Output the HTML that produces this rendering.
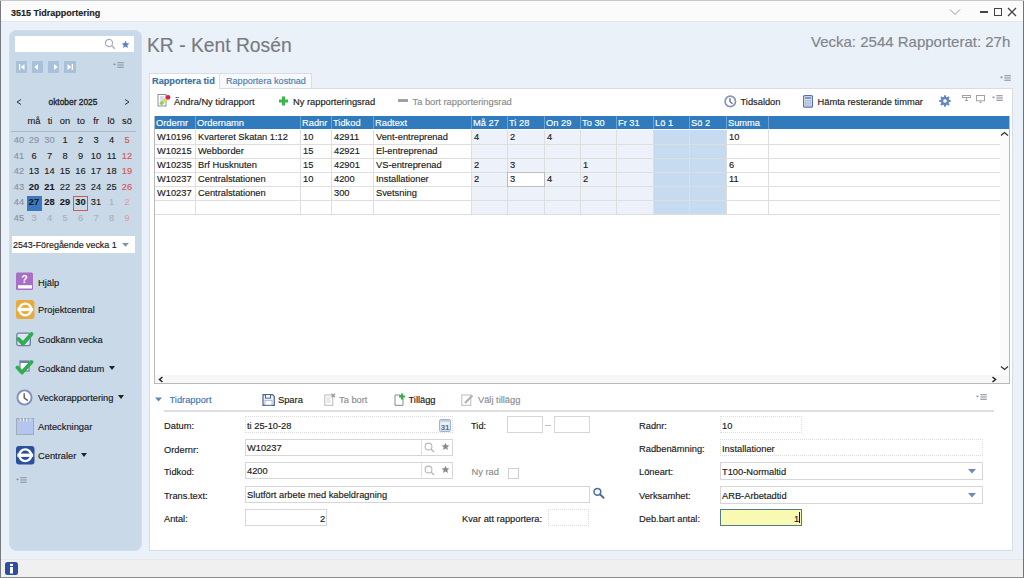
<!DOCTYPE html>
<html><head><meta charset="utf-8">
<style>
*{box-sizing:border-box;margin:0;padding:0}
html,body{width:1024px;height:578px;overflow:hidden;background:#ebf1f9;font-family:"Liberation Sans",sans-serif;font-size:9.3px;color:#1a1a1a}
.a{position:absolute}
.t{position:absolute;white-space:nowrap;line-height:12px;height:12px;-webkit-text-stroke:0.15px currentColor}
#win{position:absolute;left:0;top:0;width:1024px;height:578px;overflow:hidden}
#title{left:1px;top:1px;width:1022px;height:21px;background:#fbfbfb;border-bottom:1px solid #e4e7eb}
#lpanel{left:8.5px;top:29.5px;width:133.5px;height:521.5px;background:#c9d9e8;border-radius:8px;box-shadow:inset 0 0 0 1px #cfdeec}
#status{left:1px;top:559px;width:1022px;height:18px;background:#f0f0f0;border-top:1px solid #e6e6e6}
#main{left:148.5px;top:88px;width:864.5px;height:463px;background:#fff;border:1px solid #d8dde3}
.cal{position:absolute;width:16px;text-align:center;line-height:12px;height:12px;font-size:9.3px;-webkit-text-stroke:0.12px currentColor}
.wk{color:#8a9099}
.gr{color:#8d949c}
.rd{color:#d9534f}
.lrd{color:#e0a0a0}
.lg{color:#a9b0b8}
.b{font-weight:bold}
.menu{position:absolute;left:38px;white-space:nowrap;line-height:12px;height:12px;font-size:9.3px;color:#1a1a1a;-webkit-text-stroke:0.15px currentColor}
.arr{display:inline-block;width:0;height:0;border-left:3.5px solid transparent;border-right:3.5px solid transparent;border-top:4px solid #222;vertical-align:middle;margin-left:5px;position:relative;top:-1px}
</style></head><body>
<div id="win">
<!-- window borders -->
<div class="a" style="left:0;top:0;width:1px;height:578px;background:#767b82"></div>
<div class="a" style="left:1023px;top:0;width:1px;height:578px;background:#707478"></div>
<div class="a" style="left:0;top:0;width:1024px;height:1px;background:#c8c8c8"></div>
<div class="a" style="left:0;top:577px;width:1024px;height:1px;background:#8c8c8c"></div>

<!-- title bar -->
<div id="title" class="a"></div>
<div class="t b" style="left:11px;top:7px;font-size:9px;color:#222">3515 Tidrapportering</div>
<svg class="a" style="left:949px;top:8px" width="12" height="8" viewBox="0 0 12 8"><path d="M1 1.5 L6 6.5 L11 1.5" fill="none" stroke="#9a9a9a" stroke-width="1"/></svg>
<div class="a" style="left:980px;top:11px;width:8px;height:2px;background:#444"></div>
<div class="a" style="left:994px;top:8px;width:8px;height:8px;border:1.5px solid #444"></div>
<svg class="a" style="left:1007px;top:7px" width="10" height="10" viewBox="0 0 10 10"><path d="M1 1 L9 9 M9 1 L1 9" stroke="#444" stroke-width="1.3"/></svg>

<!-- left panel -->
<div id="lpanel" class="a"></div>
<div class="a" style="left:15px;top:36px;width:119px;height:16px;background:#fff"></div>
<svg class="a" style="left:104px;top:38px" width="12" height="12" viewBox="0 0 12 12"><circle cx="5" cy="5" r="3.6" fill="none" stroke="#a8b0c0" stroke-width="1.2"/><path d="M7.6 7.6 L10.8 10.8" stroke="#a8b0c0" stroke-width="1.4"/></svg>
<svg class="a" style="left:121px;top:39.5px" width="9" height="9" viewBox="0 0 11 11"><path d="M5.5 0.8 L6.9 4 L10.3 4.2 L7.7 6.4 L8.5 9.8 L5.5 8 L2.5 9.8 L3.3 6.4 L0.7 4.2 L4.1 4 Z" fill="#5b7fc0"/></svg>
<!-- nav buttons -->
<div class="a" style="left:16px;top:61px;width:11px;height:12px;background:#a9c0da;border-radius:1px"></div>
<div class="a" style="left:32px;top:61px;width:11px;height:12px;background:#a9c0da;border-radius:1px"></div>
<div class="a" style="left:48px;top:61px;width:11px;height:12px;background:#a9c0da;border-radius:1px"></div>
<div class="a" style="left:64px;top:61px;width:12px;height:12px;background:#a9c0da;border-radius:1px"></div>
<svg class="a" style="left:16px;top:61px" width="60" height="12" viewBox="0 0 60 12"><path d="M3 3 h1.3 v6 h-1.3z M8.5 3 L4.8 6 L8.5 9z M22 3 L18.3 6 L22 9z M38 3 L41.7 6 L38 9z M51.5 3 L55.2 6 L51.5 9z M55.7 3 h1.3 v6 h-1.3z" fill="#fff"/></svg>
<svg class="a" style="left:112.5px;top:62px" width="11" height="6" viewBox="0 0 11 6"><path d="M0 1.8 L3 1.8 L1.5 3.6z" fill="#7d8590"/><path d="M4.3 0.5 h6.5 M4.3 2.2 h6.5 M4.3 3.9 h6.5 M4.3 5.5 h6.5" stroke="#98a0aa" stroke-width="0.95"/></svg>

<!-- calendar -->
<svg class="a" style="left:16px;top:99px" width="6" height="6" viewBox="0 0 6 6"><path d="M5 0.5 L1 3 L5 5.5" fill="none" stroke="#333" stroke-width="1"/></svg>
<div class="t" style="left:48.5px;top:95.5px;font-size:8.4px;-webkit-text-stroke:0.3px #222;color:#222">oktober 2025</div>
<svg class="a" style="left:124px;top:99px" width="6" height="6" viewBox="0 0 6 6"><path d="M1 0.5 L5 3 L1 5.5" fill="none" stroke="#333" stroke-width="1"/></svg>
<div class="cal" style="left:26px;top:115px">må</div>
<div class="cal" style="left:42px;top:115px">ti</div>
<div class="cal" style="left:57px;top:115px">on</div>
<div class="cal" style="left:73px;top:115px">to</div>
<div class="cal" style="left:88px;top:115px">fr</div>
<div class="cal" style="left:103px;top:115px">lö</div>
<div class="cal" style="left:119px;top:115px">sö</div>
<div class="a" style="left:11px;top:131px;width:125px;height:1px;background:#a9b6c4"></div>
<div id="calbody"></div>
<div class="cal wk" style="left:11px;top:134.2px">40</div>
<div class="cal gr" style="left:26.0px;top:134.2px">29</div>
<div class="cal gr" style="left:41.5px;top:134.2px">30</div>
<div class="cal " style="left:57.0px;top:134.2px">1</div>
<div class="cal " style="left:72.5px;top:134.2px">2</div>
<div class="cal " style="left:88.0px;top:134.2px">3</div>
<div class="cal " style="left:103.5px;top:134.2px">4</div>
<div class="cal rd" style="left:119.0px;top:134.2px">5</div>
<div class="cal wk" style="left:11px;top:149.6px">41</div>
<div class="cal " style="left:26.0px;top:149.6px">6</div>
<div class="cal " style="left:41.5px;top:149.6px">7</div>
<div class="cal " style="left:57.0px;top:149.6px">8</div>
<div class="cal " style="left:72.5px;top:149.6px">9</div>
<div class="cal " style="left:88.0px;top:149.6px">10</div>
<div class="cal " style="left:103.5px;top:149.6px">11</div>
<div class="cal rd" style="left:119.0px;top:149.6px">12</div>
<div class="cal wk" style="left:11px;top:165.0px">42</div>
<div class="cal " style="left:26.0px;top:165.0px">13</div>
<div class="cal " style="left:41.5px;top:165.0px">14</div>
<div class="cal " style="left:57.0px;top:165.0px">15</div>
<div class="cal " style="left:72.5px;top:165.0px">16</div>
<div class="cal " style="left:88.0px;top:165.0px">17</div>
<div class="cal " style="left:103.5px;top:165.0px">18</div>
<div class="cal rd" style="left:119.0px;top:165.0px">19</div>
<div class="cal wk" style="left:11px;top:180.5px">43</div>
<div class="cal b" style="left:26.0px;top:180.5px">20</div>
<div class="cal b" style="left:41.5px;top:180.5px">21</div>
<div class="cal " style="left:57.0px;top:180.5px">22</div>
<div class="cal " style="left:72.5px;top:180.5px">23</div>
<div class="cal " style="left:88.0px;top:180.5px">24</div>
<div class="cal " style="left:103.5px;top:180.5px">25</div>
<div class="cal rd" style="left:119.0px;top:180.5px">26</div>
<div class="cal wk" style="left:11px;top:196.0px">44</div>
<div class="a" style="left:26.5px;top:195.5px;width:15px;height:15px;background:#3a79c0"></div>
<div class="cal b" style="left:26.0px;top:196.0px">27</div>
<div class="cal b" style="left:41.5px;top:196.0px">28</div>
<div class="cal b" style="left:57.0px;top:196.0px">29</div>
<div class="a" style="left:73.0px;top:195.5px;width:15px;height:15px;border:1px solid #d9534f"></div>
<div class="cal b" style="left:72.5px;top:196.0px">30</div>
<div class="cal " style="left:88.0px;top:196.0px">31</div>
<div class="cal lg" style="left:103.5px;top:196.0px">1</div>
<div class="cal lrd" style="left:119.0px;top:196.0px">2</div>
<div class="cal wk" style="left:11px;top:211.5px">45</div>
<div class="cal lg" style="left:26.0px;top:211.5px">3</div>
<div class="cal lg" style="left:41.5px;top:211.5px">4</div>
<div class="cal lg" style="left:57.0px;top:211.5px">5</div>
<div class="cal lg" style="left:72.5px;top:211.5px">6</div>
<div class="cal lg" style="left:88.0px;top:211.5px">7</div>
<div class="cal lg" style="left:103.5px;top:211.5px">8</div>
<div class="cal lrd" style="left:119.0px;top:211.5px">9</div>


<!-- week dropdown -->
<div class="a" style="left:11.5px;top:236px;width:123px;height:16.5px;background:#fff"></div>
<div class="t" style="left:13px;top:238.5px;font-size:8.9px">2543-Föregående vecka 1</div>
<svg class="a" style="left:122px;top:242.5px" width="7" height="4" viewBox="0 0 7 4"><path d="M0 0 L7 0 L3.5 3.8z" fill="#7d93b3"/></svg>

<!-- menu -->
<div id="menubody"></div>
<svg class="a" style="left:15px;top:272px" width="19" height="19" viewBox="0 0 19 19"><rect x="1" y="0.5" width="17" height="13" rx="1.5" fill="#a86fc4"/><rect x="1" y="12" width="17" height="6" rx="1.2" fill="#a86fc4"/><rect x="3" y="13.2" width="14" height="3.3" fill="#fff"/><text x="9.5" y="10.5" font-family="Liberation Sans" font-weight="bold" font-size="10.5" fill="#fff" text-anchor="middle">?</text></svg>
<div class="menu" style="top:276.5px">Hjälp</div>
<svg class="a" style="left:15.5px;top:300px" width="19" height="19" viewBox="0 0 19 19"><rect x="0" y="0" width="18.5" height="19" rx="3" fill="#eaa93a"/><circle cx="9.25" cy="9.5" r="5.9" fill="none" stroke="#fff" stroke-width="2.4"/><rect x="1.3" y="7.85" width="15.9" height="3.3" fill="#fff"/></svg>
<div class="menu" style="top:304px">Projektcentral</div>
<svg class="a" style="left:15px;top:331px" width="20" height="17" viewBox="0 0 20 17"><rect x="1.8" y="2.2" width="13.5" height="12.5" rx="2" fill="#dde4f2" stroke="#6f7fa8" stroke-width="1.3"/><path d="M3.5 8 L8 12.8 L16.5 3" fill="none" stroke="#2fae4e" stroke-width="4" stroke-linecap="round" stroke-linejoin="round"/></svg>
<div class="menu" style="top:333.5px">Godkänn vecka</div>
<svg class="a" style="left:15px;top:359px" width="20" height="17" viewBox="0 0 20 17"><rect x="5" y="2" width="9" height="10" fill="#fff" stroke="#6f7fa8" stroke-width="1.2"/><rect x="5" y="2" width="9" height="2" fill="#6f7fa8"/><path d="M2.5 8.5 L7 13.5 L16.5 3" fill="none" stroke="#2fae4e" stroke-width="3.8" stroke-linecap="round" stroke-linejoin="round"/></svg>
<div class="menu" style="top:362.5px">Godkänd datum<span class="arr"></span></div>
<svg class="a" style="left:16px;top:389px" width="17" height="17" viewBox="0 0 17 17"><circle cx="8.5" cy="8.5" r="7.1" fill="#fff" stroke="#7f8eba" stroke-width="1.9"/><path d="M8.2 4.3 L8.2 8.8 L11.8 11.6" fill="none" stroke="#666" stroke-width="1.5"/></svg>
<div class="menu" style="top:391.5px">Veckorapportering<span class="arr"></span></div>
<svg class="a" style="left:16px;top:418px" width="18" height="17" viewBox="0 0 18 17"><rect x="0.5" y="0.5" width="17" height="16" fill="#b4c5f0" stroke="#a3abb8" stroke-width="1"/><path d="M4 0.3 v3 M7.3 0.3 v3 M10.6 0.3 v3 M13.9 0.3 v3" stroke="#fff" stroke-width="1.2"/><path d="M3.2 0.3 v2.5 M6.5 0.3 v2.5 M9.8 0.3 v2.5 M13.1 0.3 v2.5" stroke="#8c95a5" stroke-width="0.8"/></svg>
<div class="menu" style="top:420.5px">Anteckningar</div>
<svg class="a" style="left:15.5px;top:446px" width="19" height="19" viewBox="0 0 19 19"><rect x="0" y="0" width="18.5" height="18.5" rx="3" fill="#2c4f9c"/><circle cx="9.25" cy="9.25" r="5.9" fill="none" stroke="#fff" stroke-width="2.4"/><rect x="1.3" y="7.6" width="15.9" height="3.3" fill="#fff"/></svg>
<div class="menu" style="top:449.5px">Centraler<span class="arr"></span></div>
<svg class="a" style="left:15.5px;top:477px" width="11" height="6" viewBox="0 0 11 6"><path d="M0 1.8 L3 1.8 L1.5 3.6z" fill="#7d8590"/><path d="M4.3 0.5 h6.5 M4.3 2.2 h6.5 M4.3 3.9 h6.5 M4.3 5.5 h6.5" stroke="#98a0aa" stroke-width="0.95"/></svg>


<!-- status bar -->
<div id="status" class="a"></div>
<svg class="a" style="left:5px;top:562px" width="13" height="13" viewBox="0 0 13 13"><rect x="0" y="0" width="13" height="13" rx="2.5" fill="#2b4f9e"/><rect x="5" y="5" width="3" height="6.5" fill="#fff"/><rect x="5" y="1.8" width="3" height="2.2" fill="#fff"/></svg>

<!-- main heading -->
<div class="t" style="left:147px;top:33.8px;font-size:19.3px;letter-spacing:0;line-height:24px;height:24px;color:#777b80">KR - Kent Rosén</div>
<div class="t" style="left:811px;top:29.6px;font-size:15px;letter-spacing:0;line-height:24px;height:24px;color:#80858a">Vecka: 2544 Rapporterat: 27h</div>
<svg class="a" style="left:1000px;top:75px" width="11" height="6" viewBox="0 0 11 6"><path d="M0 1.8 L3 1.8 L1.5 3.6z" fill="#7d8590"/><path d="M4.3 0.5 h6.5 M4.3 2.2 h6.5 M4.3 3.9 h6.5 M4.3 5.5 h6.5" stroke="#98a0aa" stroke-width="0.95"/></svg>

<!-- main panel -->
<div id="main" class="a"></div>
<!-- tabs -->
<div class="a" style="left:149px;top:73px;width:71px;height:16px;background:#fff;border:1px solid #d6dde6;border-bottom:none"></div>
<div class="t b" style="left:152px;top:75px;font-size:9.2px;color:#3c6fa3">Rapportera tid</div>
<div class="a" style="left:219px;top:73px;width:93px;height:15px;background:#f7f9fc;border:1px solid #d6dde6;border-bottom:none"></div>
<div class="t" style="left:226px;top:75px;font-size:9.1px;color:#4d7eae">Rapportera kostnad</div>

<div id="mainbody"></div>
<svg class="a" style="left:157px;top:94px" width="14" height="13" viewBox="0 0 14 13"><rect x="1" y="0.5" width="8" height="11.5" fill="#fff" stroke="#8a8f99" stroke-width="1"/><path d="M3 3 h4 M3 5 h4 M3 7 h3 M3 9 h3" stroke="#9aa9d8" stroke-width="0.8"/><path d="M4 10 L11 3" stroke="#e8d84a" stroke-width="3"/><path d="M3.5 10.5 L6 8" stroke="#7fcf6a" stroke-width="3"/><circle cx="11" cy="3.3" r="2.4" fill="#d0245c"/></svg>
<div class="t" style="left:174px;top:95.5px">Ändra/Ny tidrapport</div>
<svg class="a" style="left:278px;top:96px" width="11" height="10" viewBox="0 0 11 10"><path d="M5.5 0.5 v9 M1 5 h9" stroke="#39b54a" stroke-width="3"/></svg>
<div class="t" style="left:293px;top:95.5px">Ny rapporteringsrad</div>
<div class="a" style="left:398px;top:99px;width:9.5px;height:2.8px;background:#a0a0a0;border-radius:0.5px"></div>
<div class="t" style="left:412.5px;top:95.5px;color:#8a8a8a">Ta bort rapporteringsrad</div>
<svg class="a" style="left:724px;top:94.5px" width="13" height="13" viewBox="0 0 13 13"><circle cx="6.3" cy="6.4" r="5.2" fill="#fff" stroke="#8494bf" stroke-width="1.7"/><path d="M6 3.2 L6 6.6 L8.6 8.9" fill="none" stroke="#5a5a5a" stroke-width="1.2"/></svg>
<div class="t" style="left:740.5px;top:95.5px">Tidsaldon</div>
<svg class="a" style="left:802.5px;top:94.5px" width="10" height="13" viewBox="0 0 10 13"><rect x="0.6" y="0.6" width="8.8" height="11.6" rx="1" fill="#f2f5fb" stroke="#5071ad" stroke-width="1.2"/><rect x="2" y="2" width="6" height="2.2" fill="#7f98c8"/><g fill="#8aa0cc"><rect x="2" y="5.2" width="1.6" height="1.4"/><rect x="4.2" y="5.2" width="1.6" height="1.4"/><rect x="6.4" y="5.2" width="1.6" height="1.4"/><rect x="2" y="7.3" width="1.6" height="1.4"/><rect x="4.2" y="7.3" width="1.6" height="1.4"/><rect x="6.4" y="7.3" width="1.6" height="1.4"/><rect x="2" y="9.4" width="1.6" height="1.4"/><rect x="4.2" y="9.4" width="1.6" height="1.4"/><rect x="6.4" y="9.4" width="1.6" height="1.4"/></g></svg>
<div class="t" style="left:817.5px;top:95.5px">Hämta resterande timmar</div>
<svg class="a" style="left:938.5px;top:94.5px" width="12" height="12" viewBox="0 0 12 12"><g fill="#6587c0"><circle cx="6" cy="6" r="4.2"/><rect x="5" y="0.3" width="2" height="11.4"/><rect x="0.3" y="5" width="11.4" height="2"/><rect x="5" y="0.3" width="2" height="11.4" transform="rotate(45 6 6)"/><rect x="5" y="0.3" width="2" height="11.4" transform="rotate(-45 6 6)"/></g><circle cx="6" cy="6" r="1.8" fill="#fff"/></svg>
<svg class="a" style="left:962px;top:95px" width="9" height="7" viewBox="0 0 9 7"><rect x="0.5" y="0.5" width="8" height="2" fill="none" stroke="#999" stroke-width="0.9"/><path d="M4.5 2.5 v2" stroke="#999" stroke-width="0.9"/><path d="M2.5 6 L4.5 4.3 L6.5 6z" fill="#999"/></svg>
<svg class="a" style="left:976px;top:95px" width="9" height="8" viewBox="0 0 9 8"><rect x="0.5" y="0.5" width="8" height="5.3" fill="none" stroke="#999" stroke-width="0.9"/><path d="M3 7.7 L4.5 6 L6 7.7z" fill="#999"/></svg>
<svg class="a" style="left:992px;top:95px" width="11" height="6" viewBox="0 0 11 6"><path d="M0 1.8 L3 1.8 L1.5 3.6z" fill="#7d8590"/><path d="M4.3 0.5 h6.5 M4.3 2.2 h6.5 M4.3 3.9 h6.5 M4.3 5.5 h6.5" stroke="#98a0aa" stroke-width="0.95"/></svg>
<div class="a" style="left:154px;top:116px;width:856px;height:268px;border:1px solid #b9b9b9;border-top:none;background:#fff"></div>
<div class="a" style="left:155px;top:116px;width:854px;height:13px;background:#2f7bbe"></div>
<div class="a" style="left:472px;top:130px;width:181px;height:84px;background:#edf1f9"></div>
<div class="a" style="left:654px;top:130px;width:72px;height:84px;background:#c6dbef"></div>
<div class="a" style="left:195px;top:116px;width:1px;height:14px;background:#6ea2d2;height:13px"></div>
<div class="a" style="left:300px;top:116px;width:1px;height:14px;background:#6ea2d2;height:13px"></div>
<div class="a" style="left:331px;top:116px;width:1px;height:14px;background:#6ea2d2;height:13px"></div>
<div class="a" style="left:373px;top:116px;width:1px;height:14px;background:#6ea2d2;height:13px"></div>
<div class="a" style="left:471px;top:116px;width:1px;height:14px;background:#6ea2d2;height:13px"></div>
<div class="a" style="left:507px;top:116px;width:1px;height:14px;background:#6ea2d2;height:13px"></div>
<div class="a" style="left:544px;top:116px;width:1px;height:14px;background:#6ea2d2;height:13px"></div>
<div class="a" style="left:580px;top:116px;width:1px;height:14px;background:#6ea2d2;height:13px"></div>
<div class="a" style="left:616px;top:116px;width:1px;height:14px;background:#6ea2d2;height:13px"></div>
<div class="a" style="left:653px;top:116px;width:1px;height:14px;background:#6ea2d2;height:13px"></div>
<div class="a" style="left:689px;top:116px;width:1px;height:14px;background:#6ea2d2;height:13px"></div>
<div class="a" style="left:726px;top:116px;width:1px;height:14px;background:#6ea2d2;height:13px"></div>
<div class="a" style="left:768px;top:116px;width:1px;height:14px;background:#6ea2d2;height:13px"></div>
<div class="a" style="left:195px;top:130px;width:1px;height:85px;background:#dedede"></div>
<div class="a" style="left:300px;top:130px;width:1px;height:85px;background:#dedede"></div>
<div class="a" style="left:331px;top:130px;width:1px;height:85px;background:#dedede"></div>
<div class="a" style="left:373px;top:130px;width:1px;height:85px;background:#dedede"></div>
<div class="a" style="left:471px;top:130px;width:1px;height:85px;background:#dedede"></div>
<div class="a" style="left:507px;top:130px;width:1px;height:85px;background:#dedede"></div>
<div class="a" style="left:544px;top:130px;width:1px;height:85px;background:#dedede"></div>
<div class="a" style="left:580px;top:130px;width:1px;height:85px;background:#dedede"></div>
<div class="a" style="left:616px;top:130px;width:1px;height:85px;background:#dedede"></div>
<div class="a" style="left:653px;top:130px;width:1px;height:85px;background:#dedede"></div>
<div class="a" style="left:689px;top:130px;width:1px;height:85px;background:#dedede"></div>
<div class="a" style="left:726px;top:130px;width:1px;height:85px;background:#dedede"></div>
<div class="a" style="left:768px;top:130px;width:1px;height:85px;background:#dedede"></div>
<div class="a" style="left:155px;top:144px;width:845px;height:1px;background:#dedede"></div>
<div class="a" style="left:155px;top:158px;width:845px;height:1px;background:#dedede"></div>
<div class="a" style="left:155px;top:172px;width:845px;height:1px;background:#dedede"></div>
<div class="a" style="left:155px;top:186px;width:845px;height:1px;background:#dedede"></div>
<div class="a" style="left:155px;top:200px;width:845px;height:1px;background:#dedede"></div>
<div class="a" style="left:155px;top:214px;width:845px;height:1px;background:#dedede"></div>
<div class="a" style="left:507px;top:172px;width:38px;height:15px;background:#fff;border:1px solid #bdbdbd"></div>
<div class="t" style="left:156px;top:117px;color:#fff">Ordernr</div>
<div class="t" style="left:197px;top:117px;color:#fff">Ordernamn</div>
<div class="t" style="left:302px;top:117px;color:#fff">Radnr</div>
<div class="t" style="left:333px;top:117px;color:#fff">Tidkod</div>
<div class="t" style="left:375px;top:117px;color:#fff">Radtext</div>
<div class="t" style="left:473px;top:117px;color:#fff">Må 27</div>
<div class="t" style="left:509px;top:117px;color:#fff">Ti 28</div>
<div class="t" style="left:546px;top:117px;color:#fff">On 29</div>
<div class="t" style="left:582px;top:117px;color:#fff">To 30</div>
<div class="t" style="left:618px;top:117px;color:#fff">Fr 31</div>
<div class="t" style="left:655px;top:117px;color:#fff">Lö 1</div>
<div class="t" style="left:691px;top:117px;color:#fff">Sö 2</div>
<div class="t" style="left:728px;top:117px;color:#fff">Summa</div>
<div class="t" style="left:157px;top:131.2px">W10196</div>
<div class="t" style="left:198px;top:131.2px">Kvarteret Skatan 1:12</div>
<div class="t" style="left:303px;top:131.2px">10</div>
<div class="t" style="left:334px;top:131.2px">42911</div>
<div class="t" style="left:376px;top:131.2px">Vent-entreprenad</div>
<div class="t" style="left:474px;top:131.2px">4</div>
<div class="t" style="left:510px;top:131.2px">2</div>
<div class="t" style="left:547px;top:131.2px">4</div>
<div class="t" style="left:729px;top:131.2px">10</div>
<div class="t" style="left:157px;top:145.2px">W10215</div>
<div class="t" style="left:198px;top:145.2px">Webborder</div>
<div class="t" style="left:303px;top:145.2px">15</div>
<div class="t" style="left:334px;top:145.2px">42921</div>
<div class="t" style="left:376px;top:145.2px">El-entreprenad</div>
<div class="t" style="left:157px;top:159.2px">W10235</div>
<div class="t" style="left:198px;top:159.2px">Brf Husknuten</div>
<div class="t" style="left:303px;top:159.2px">15</div>
<div class="t" style="left:334px;top:159.2px">42901</div>
<div class="t" style="left:376px;top:159.2px">VS-entreprenad</div>
<div class="t" style="left:474px;top:159.2px">2</div>
<div class="t" style="left:510px;top:159.2px">3</div>
<div class="t" style="left:583px;top:159.2px">1</div>
<div class="t" style="left:729px;top:159.2px">6</div>
<div class="t" style="left:157px;top:173.2px">W10237</div>
<div class="t" style="left:198px;top:173.2px">Centralstationen</div>
<div class="t" style="left:303px;top:173.2px">10</div>
<div class="t" style="left:334px;top:173.2px">4200</div>
<div class="t" style="left:376px;top:173.2px">Installationer</div>
<div class="t" style="left:474px;top:173.2px">2</div>
<div class="t" style="left:510px;top:173.2px">3</div>
<div class="t" style="left:547px;top:173.2px">4</div>
<div class="t" style="left:583px;top:173.2px">2</div>
<div class="t" style="left:729px;top:173.2px">11</div>
<div class="t" style="left:157px;top:187.2px">W10237</div>
<div class="t" style="left:198px;top:187.2px">Centralstationen</div>
<div class="t" style="left:334px;top:187.2px">300</div>
<div class="t" style="left:376px;top:187.2px">Svetsning</div>
<div class="a" style="left:155px;top:375px;width:854px;height:8px;background:#f7f7f7"></div>
<svg class="a" style="left:157.5px;top:375.5px" width="6" height="7" viewBox="0 0 6 7"><path d="M4.5 1 L1.5 3.5 L4.5 6" fill="none" stroke="#222" stroke-width="1.5"/></svg>
<svg class="a" style="left:990.5px;top:375.5px" width="6" height="7" viewBox="0 0 6 7"><path d="M1.5 1 L4.5 3.5 L1.5 6" fill="none" stroke="#222" stroke-width="1.5"/></svg>
<div class="a" style="left:1000px;top:130px;width:9px;height:245px;background:#fbfbfb"></div>
<svg class="a" style="left:1000px;top:131px" width="9" height="6" viewBox="0 0 9 6"><path d="M1 4.5 L4.5 1.5 L8 4.5" fill="none" stroke="#333" stroke-width="1.3"/></svg>
<svg class="a" style="left:1000px;top:365px" width="9" height="6" viewBox="0 0 9 6"><path d="M1 1.5 L4.5 4.5 L8 1.5" fill="none" stroke="#333" stroke-width="1.3"/></svg>
<svg class="a" style="left:155px;top:397px" width="7" height="5" viewBox="0 0 7 5"><path d="M0 0.5 L7 0.5 L3.5 4.5z" fill="#5b86c0"/></svg>
<div class="t" style="left:169.5px;top:394px;color:#3d75b8">Tidrapport</div>
<svg class="a" style="left:262px;top:394px" width="13" height="12" viewBox="0 0 13 12"><path d="M1 0.6 h9.5 l1.8 1.8 v9 h-11.3z" fill="#e9eef8" stroke="#4a6496" stroke-width="1.2"/><rect x="3.5" y="0.6" width="5" height="3.5" fill="#fff" stroke="#4a6496" stroke-width="1"/><rect x="3" y="6.5" width="7" height="4.5" fill="#fff" stroke="#9aa8c8" stroke-width="0.7"/></svg>
<div class="t" style="left:278px;top:394px">Spara</div>
<svg class="a" style="left:324px;top:393px" width="12" height="13" viewBox="0 0 12 13"><rect x="0.8" y="2" width="8" height="10.3" fill="#fff" stroke="#b8b8b8" stroke-width="1"/><path d="M2.5 5 h4 M2.5 7 h4 M2.5 9 h4" stroke="#c4c4c4" stroke-width="0.8"/><path d="M7.5 0.8 L11 4.3 M11 0.8 L7.5 4.3" stroke="#999" stroke-width="1.3"/></svg>
<div class="t" style="left:339px;top:394px;color:#8c8c8c">Ta bort</div>
<svg class="a" style="left:394px;top:393px" width="12" height="13" viewBox="0 0 12 13"><path d="M1 2 h5 l3 3 v7.3 h-8z" fill="#fff" stroke="#888" stroke-width="1"/><path d="M8 0.5 v6 M5 3.5 h6" stroke="#2fb04a" stroke-width="2.2"/></svg>
<div class="t" style="left:408.5px;top:394px">Tillägg</div>
<svg class="a" style="left:461px;top:393px" width="14" height="13" viewBox="0 0 14 13"><rect x="0.8" y="2" width="9" height="10.3" fill="#fff" stroke="#bcbcbc" stroke-width="1"/><path d="M4 10 L11.5 2.5" stroke="#b0b0b0" stroke-width="2.2"/></svg>
<div class="t" style="left:478px;top:394px;color:#8c8c8c">Välj tillägg</div>
<svg class="a" style="left:976px;top:394px" width="11" height="6" viewBox="0 0 11 6"><path d="M0 1.8 L3 1.8 L1.5 3.6z" fill="#7d8590"/><path d="M4.3 0.5 h6.5 M4.3 2.2 h6.5 M4.3 3.9 h6.5 M4.3 5.5 h6.5" stroke="#98a0aa" stroke-width="0.95"/></svg>
<div class="a" style="left:164px;top:410px;width:830px;height:2px;background:#dedede"></div>

<!-- labels left -->
<div class="t" style="left:164px;top:419.5px">Datum:</div>
<div class="t" style="left:164px;top:443.5px">Ordernr:</div>
<div class="t" style="left:164px;top:466px">Tidkod:</div>
<div class="t" style="left:164px;top:489.5px">Trans.text:</div>
<div class="t" style="left:164px;top:513px">Antal:</div>

<!-- Datum input -->
<div class="a" style="left:245px;top:416px;width:208px;height:17px;border:1px dotted #dcdcdc"></div>
<div class="t" style="left:247px;top:419.5px">ti 25-10-28</div>
<svg class="a" style="left:438.5px;top:418.5px" width="12" height="13" viewBox="0 0 12 13"><rect x="0.6" y="0.6" width="10.8" height="11.8" rx="1.5" fill="#e8f0fa" stroke="#a3b2c8" stroke-width="1.1"/><rect x="1" y="1" width="10" height="1.8" fill="#c3cedd"/><text x="6" y="10.6" font-family="Liberation Sans" font-weight="bold" font-size="8" fill="#5a6a82" text-anchor="middle" letter-spacing="-0.3">31</text></svg>
<!-- Ordernr -->
<div class="a" style="left:245px;top:439px;width:208px;height:17px;border:1px solid #d6d6d6"></div>
<div class="a" style="left:421px;top:440px;width:1px;height:15px;background:#e0e0e0"></div>
<div class="t" style="left:247px;top:442px">W10237</div>
<svg class="a" style="left:424px;top:442px" width="11" height="11" viewBox="0 0 11 11"><circle cx="4.5" cy="4.5" r="3.4" fill="none" stroke="#b9b9b9" stroke-width="1.1"/><path d="M7 7 L10 10" stroke="#b9b9b9" stroke-width="1.4"/></svg>
<svg class="a" style="left:441px;top:442px" width="9" height="9" viewBox="0 0 11 11"><path d="M5.5 0.8 L6.9 4 L10.3 4.2 L7.7 6.4 L8.5 9.8 L5.5 8 L2.5 9.8 L3.3 6.4 L0.7 4.2 L4.1 4 Z" fill="#8a8a8a"/></svg>
<!-- Tidkod -->
<div class="a" style="left:245px;top:462px;width:208px;height:17px;border:1px solid #d6d6d6"></div>
<div class="a" style="left:421px;top:463px;width:1px;height:15px;background:#e0e0e0"></div>
<div class="t" style="left:247px;top:465px">4200</div>
<svg class="a" style="left:424px;top:465px" width="11" height="11" viewBox="0 0 11 11"><circle cx="4.5" cy="4.5" r="3.4" fill="none" stroke="#b9b9b9" stroke-width="1.1"/><path d="M7 7 L10 10" stroke="#b9b9b9" stroke-width="1.4"/></svg>
<svg class="a" style="left:441px;top:465px" width="9" height="9" viewBox="0 0 11 11"><path d="M5.5 0.8 L6.9 4 L10.3 4.2 L7.7 6.4 L8.5 9.8 L5.5 8 L2.5 9.8 L3.3 6.4 L0.7 4.2 L4.1 4 Z" fill="#8a8a8a"/></svg>
<!-- Trans.text -->
<div class="a" style="left:245px;top:486px;width:345px;height:17px;border:1px solid #d6d6d6"></div>
<div class="t" style="left:247px;top:488.5px">Slutfört arbete med kabeldragning</div>
<svg class="a" style="left:592px;top:487px" width="13" height="13" viewBox="0 0 13 13"><circle cx="5.4" cy="4.8" r="3.4" fill="#f4f8fd" stroke="#506c98" stroke-width="1.5"/><path d="M7.9 7.3 L11.6 10.8" stroke="#506c98" stroke-width="1.9" stroke-linecap="round"/></svg>
<!-- Antal -->
<div class="a" style="left:245px;top:509px;width:82px;height:17px;border:1px solid #d6d6d6"></div>
<div class="t" style="left:320px;top:512.5px">2</div>

<!-- Tid -->
<div class="t" style="left:471px;top:419.5px">Tid:</div>
<div class="a" style="left:507px;top:416px;width:36px;height:17px;border:1px solid #d6d6d6"></div>
<div class="a" style="left:545px;top:424.5px;width:6px;height:1px;background:#c0c0c0"></div>
<div class="a" style="left:554px;top:416px;width:36px;height:17px;border:1px solid #d6d6d6"></div>
<!-- Ny rad -->
<div class="t" style="left:471.5px;top:466px;color:#8c8c8c">Ny rad</div>
<div class="a" style="left:508px;top:467.5px;width:11px;height:11px;border:1px solid #cfcfcf"></div>
<!-- Kvar att -->
<div class="t" style="left:462px;top:513px">Kvar att rapportera:</div>
<div class="a" style="left:548px;top:509px;width:41px;height:17px;border:1px dotted #dcdcdc"></div>

<!-- right column -->
<div class="t" style="left:639px;top:419.5px">Radnr:</div>
<div class="t" style="left:639px;top:442.5px">Radbenämning:</div>
<div class="t" style="left:639px;top:466px">Löneart:</div>
<div class="t" style="left:639px;top:489.5px">Verksamhet:</div>
<div class="t" style="left:639px;top:513px">Deb.bart antal:</div>

<div class="a" style="left:720px;top:416px;width:82px;height:17px;border:1px dotted #dcdcdc"></div>
<div class="t" style="left:722px;top:419.5px">10</div>
<div class="a" style="left:720px;top:439px;width:263px;height:17px;border:1px dotted #dcdcdc"></div>
<div class="t" style="left:722px;top:442.5px">Installationer</div>
<div class="a" style="left:720px;top:462px;width:263px;height:18px;border:1px solid #d6d6d6"></div>
<div class="t" style="left:722px;top:466px">T100-Normaltid</div>
<svg class="a" style="left:968px;top:469px" width="8" height="5" viewBox="0 0 8 5"><path d="M0 0 L8 0 L4 4.5z" fill="#6d8bb3"/></svg>
<div class="a" style="left:720px;top:486px;width:263px;height:18px;border:1px solid #d6d6d6"></div>
<div class="t" style="left:722px;top:489.5px">ARB-Arbetadtid</div>
<svg class="a" style="left:968px;top:492.5px" width="8" height="5" viewBox="0 0 8 5"><path d="M0 0 L8 0 L4 4.5z" fill="#6d8bb3"/></svg>
<div class="a" style="left:720px;top:509px;width:82px;height:17px;border:1px solid #4f7c8a;background:#f9f9b4"></div>
<div class="t" style="left:794px;top:513px">1</div>
<div class="a" style="left:798.5px;top:512px;width:1px;height:11px;background:#111"></div>

</div>
</body></html>
